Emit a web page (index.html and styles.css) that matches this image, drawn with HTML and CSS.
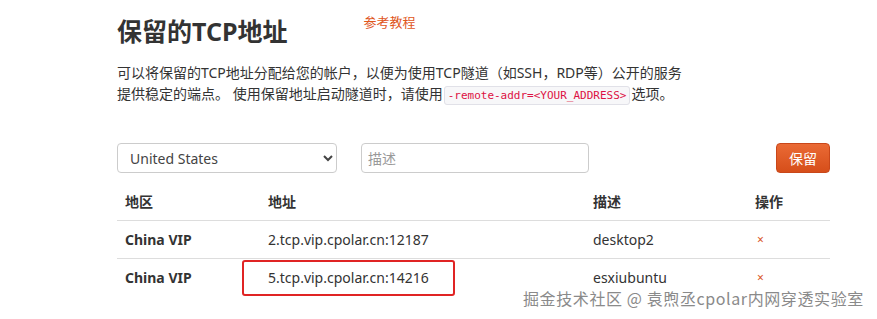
FILE: index.html
```html
<!DOCTYPE html>
<html lang="zh-CN">
<head>
    <meta charset="UTF-8">
    <title>保留的TCP地址</title>
    <link rel="stylesheet" href="styles.css">
</head>
<body>
    <div class="container">
        <div class="title-row">
            <h1>保留的TCP地址</h1>
            <a class="doc-link" href="#">参考教程</a>
        </div>
        <p class="intro">
            可以将保留的TCP地址分配给您的帐户，以便为使用TCP隧道（如SSH，RDP等）公开的服务<br>
            提供稳定的端点。 使用保留地址启动隧道时，请使用<code>-remote-addr=&lt;YOUR_ADDRESS&gt;</code>选项。
        </p>

        <div class="reserve-form">
            <select class="region">
                <option>United States</option>
                <option>China VIP</option>
            </select>
            <input type="text" class="desc" placeholder="描述">
            <button class="btn-reserve">保留</button>
        </div>

        <table class="addr-table">
            <thead>
                <tr>
                    <th class="col-region">地区</th>
                    <th class="col-addr">地址</th>
                    <th class="col-desc">描述</th>
                    <th class="col-op">操作</th>
                </tr>
            </thead>
            <tbody>
                <tr>
                    <td class="region-name">China VIP</td>
                    <td>2.tcp.vip.cpolar.cn:12187</td>
                    <td>desktop2</td>
                    <td><a class="remove" href="#">×</a></td>
                </tr>
                <tr>
                    <td class="region-name">China VIP</td>
                    <td><span class="marked">5.tcp.vip.cpolar.cn:14216</span></td>
                    <td>esxiubuntu</td>
                    <td><a class="remove" href="#">×</a></td>
                </tr>
            </tbody>
        </table>
    </div>

    <div class="watermark">掘金技术社区 @ 袁煦丞cpolar内网穿透实验室</div>
</body>
</html>
```

FILE: styles.css
```css
body {
    margin: 0;
    font-family: "Noto Sans", "Noto Sans CJK SC", sans-serif;
    color: #333;
    background: #fff;
    font-size: 14px;
}

.container {
    width: 713px;
    margin-left: 117px;
    padding-top: 7px;
}

.title-row {
    display: flex;
    align-items: flex-start;
}

h1 {
    margin: 4px 0 0 0;
    font-size: 25px;
    line-height: 40px;
    font-weight: bold;
    color: #333;
}

.doc-link {
    margin-left: 76px;
    margin-top: 5px;
    font-size: 13px;
    line-height: 20px;
    color: #e0561c;
    text-decoration: none;
}

.intro {
    margin: 11px 0 0 0;
    font-size: 14px;
    line-height: 21px;
}

code {
    font-family: "DejaVu Sans Mono", monospace;
    font-size: 11px;
    color: #d14;
    background: #f7f7f9;
    border: 1px solid #e1e1e8;
    border-radius: 3px;
    padding: 2px 3px;
    margin: 0 1px;
}

.reserve-form {
    display: flex;
    align-items: center;
    margin-top: 37px;
}

.region {
    width: 220px;
    height: 30px;
    padding: 0 8px;
    font-family: inherit;
    font-size: 14px;
    color: #444;
    border: 1px solid #ccc;
    border-radius: 4px;
    background: #fff;
}

.desc {
    width: 228px;
    height: 30px;
    box-sizing: border-box;
    margin-left: 24px;
    padding: 0 6px;
    font-family: inherit;
    font-size: 14px;
    border: 1px solid #ccc;
    border-radius: 4px;
    outline: none;
}

.desc::placeholder {
    color: #999;
}

.btn-reserve {
    margin-left: auto;
    width: 54px;
    height: 30px;
    font-family: inherit;
    font-size: 14px;
    color: #fff;
    border: 1px solid #c9471a;
    border-radius: 4px;
    background: linear-gradient(#ea6a35, #d64e1a);
    cursor: pointer;
}

.addr-table {
    width: 713px;
    margin-top: 11px;
    border-collapse: collapse;
}

.addr-table th,
.addr-table td {
    text-align: left;
    padding: 8px 8px;
    line-height: 20px;
    font-size: 14px;
}

.addr-table th {
    height: 20px;
    font-weight: bold;
    border-bottom: 1px solid #ddd;
}

.addr-table td {
    height: 20px;
}

.addr-table tbody tr:first-child td {
    border-bottom: 1px solid #ddd;
}

.col-region { width: 127px; }
.col-addr { width: 309px; }
.col-desc { width: 146px; }

.region-name {
    font-weight: bold;
}

/* red annotation frame drawn over the cell */
.marked {
    position: relative;
}

.marked::after {
    content: "";
    position: absolute;
    left: -26px;
    top: -8px;
    width: 209px;
    height: 32px;
    border: 2px solid #e02424;
    border-radius: 3px;
}

.remove {
    color: #d9531e;
    font-size: 12px;
    text-decoration: none;
    padding-left: 2px;
}

.watermark {
    position: absolute;
    left: 523px;
    top: 286px;
    font-size: 16px;
    letter-spacing: 0.6px;
    color: #8a8a8a;
    text-shadow: 0 0 2px #fff;
    font-family: "Noto Sans CJK SC", sans-serif;
}
```
